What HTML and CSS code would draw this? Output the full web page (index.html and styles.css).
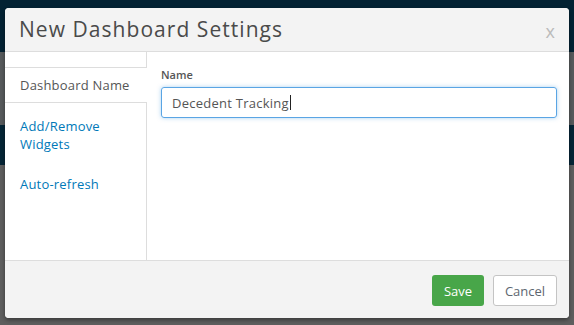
FILE: index.html
```html
<!DOCTYPE HTML>
<html lang="en">

<head>
  <meta name="viewport" content="width=device-width, initial-scale=1" charset="utf-8">
  <title>New Dashboard Settings</title>
  <link rel="stylesheet" href="styles.css">
</head>

<body>
  <div class="backdrop">
    <div class="modal">
      <div class="modal_header">
        <h1>New Dashboard Settings</h1>
        <span class="close">x</span>
      </div>

      <div class="modal_body">
        <div class="nav">
          <div class="nav_item active">Dashboard Name</div>
          <a class="nav_item" href="#">Add/Remove Widgets</a>
          <a class="nav_item" href="#">Auto-refresh</a>
        </div>

        <div class="content">
          <label for="name">Name</label>
          <div class="input"><span>Decedent Tracking</span><span class="caret"></span></div>
        </div>
      </div>

      <div class="modal_footer">
        <button type="button" class="button button-save">Save</button>
        <button type="button" class="button button-cancel">Cancel</button>
      </div>
    </div>
  </div>
</body>

</html>
```

FILE: styles.css
```css
body {
  margin: 0;
  padding: 0;
  font-family: "Open Sans", "Noto Sans", sans-serif;
  color: #565656;
}

/* dimmed page behind the modal */
.backdrop {
  height: 325px;
  padding: 8px 5px 0;
  box-sizing: border-box;
  background: linear-gradient(to bottom,
      #032233 0, #032233 52px,
      #575a5c 52px, #575a5c 125px,
      #052536 125px, #052536 165px,
      #5e5e5e 165px, #5e5e5e 325px);
}

.modal {
  width: 564px;
  height: 310px;
  background-color: #fff;
  border-radius: 4px;
  overflow: hidden;
  display: flex;
  flex-direction: column;
  box-shadow: 0 2px 4px rgba(0, 0, 0, 0.4);
}

.modal_header {
  height: 43px;
  background-color: #f3f3f3;
  border-bottom: 1px solid #ddd;
  display: flex;
  align-items: center;
  justify-content: space-between;
  padding: 0 14px 0 14px;
}

h1 {
  margin: 0 0 2px 0;
  font-size: 21px;
  font-weight: normal;
  color: #4a4a4a;
  letter-spacing: 1.05px;
}

.close {
  color: #bbb;
  font-size: 18px;
  margin-top: 2px;
}

.modal_body {
  flex: 1;
  display: flex;
}

.nav {
  width: 141px;
  border-right: 1px solid #ddd;
  padding-top: 15px;
  display: flex;
  flex-direction: column;
}

.nav_item {
  font-size: 13px;
  line-height: 18px;
  padding: 14px 15px 8px;
  color: #0079b8;
  text-decoration: none;
  letter-spacing: 0.2px;
}

.nav_item.active {
  color: #565656;
  padding: 8px 15px;
  border-top: 1px solid #ddd;
  border-bottom: 1px solid #ddd;
  background-color: #fff;
  margin-right: -1px;
}

.content {
  flex: 1;
  padding: 15px 12px 0 14px;
}

label {
  display: block;
  font-size: 11px;
  font-weight: 600;
  color: #565656;
  margin-bottom: 5px;
}

.input {
  height: 29px;
  border: 1px solid #5aa5e4;
  border-radius: 3px;
  box-shadow: 0 0 4px rgba(90, 165, 228, 0.5);
  display: flex;
  align-items: center;
  padding: 0 10px;
  font-size: 13px;
  color: #555;
  letter-spacing: 0.25px;
}

.caret {
  display: inline-block;
  width: 1px;
  height: 15px;
  background-color: #222;
  margin-left: 1px;
}

.modal_footer {
  height: 58px;
  background-color: #f3f3f3;
  border-top: 1px solid #ddd;
  display: flex;
  justify-content: flex-end;
  align-items: flex-start;
  padding: 14px 12px 0 0;
  box-sizing: border-box;
  gap: 9px;
}

.button {
  height: 31px;
  border-radius: 3px;
  font-family: inherit;
  font-size: 13px;
  cursor: pointer;
}

.button-save {
  width: 52px;
  background-color: #48a649;
  border: none;
  color: #fff;
}

.button-cancel {
  width: 64px;
  background-color: #fff;
  border: 1px solid #c4c4c4;
  color: #5d6670;
}
```
